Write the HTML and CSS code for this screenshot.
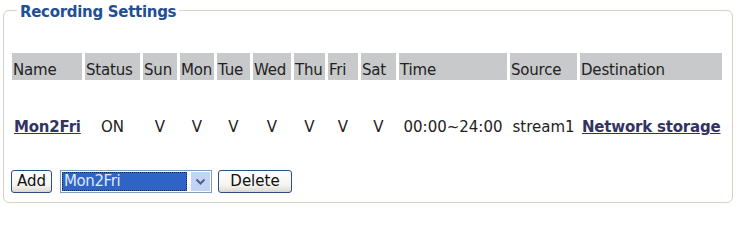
FILE: index.html
```html
<!DOCTYPE html>
<html>
<head>
<meta charset="utf-8">
<title>Recording Settings</title>
<link rel="stylesheet" href="styles.css">
</head>
<body>
<fieldset class="rec">
  <legend class="rec-title">Recording Settings</legend>
  <table class="rec-table">
    <colgroup>
      <col class="c-name"><col class="c-status"><col class="c-sun"><col class="c-mon"><col class="c-tue"><col class="c-wed"><col class="c-thu"><col class="c-fri"><col class="c-sat"><col class="c-time"><col class="c-source"><col class="c-dest">
    </colgroup>
    <thead>
      <tr>
        <th>Name</th><th>Status</th><th>Sun</th><th>Mon</th><th>Tue</th><th>Wed</th><th>Thu</th><th>Fri</th><th>Sat</th><th>Time</th><th>Source</th><th>Destination</th>
      </tr>
    </thead>
    <tbody>
      <tr>
        <td><a class="lnk" href="#">Mon2Fri</a></td><td>ON</td><td>V</td><td>V</td><td>V</td><td>V</td><td>V</td><td>V</td><td>V</td><td>00:00~24:00</td><td>stream1</td><td><a class="lnk" href="#">Network storage</a></td>
      </tr>
    </tbody>
  </table>
  <div class="actions">
    <button class="btn btn-add" type="button">Add</button>
    <div class="combo" role="combobox" aria-expanded="false">
      <span class="combo-val"><span class="combo-text">Mon2Fri</span></span>
      <span class="combo-arrow"><svg width="11" height="8" viewBox="0 0 11 8"><path d="M1.5 1.5 L5.5 5.5 L9.5 1.5" fill="none" stroke="#4d6185" stroke-width="2"/></svg></span>
    </div>
    <button class="btn btn-del" type="button">Delete</button>
  </div>
</fieldset>
</body>
</html>
```
FILE: styles.css
```css
html, body {
  margin: 0;
  padding: 0;
  background: #ffffff;
}
body {
  font-family: "DejaVu Sans", Verdana, sans-serif;
  font-size: 15px;
  color: #222222;
}
.rec {
  margin: 0 6px 0 3px;
  padding: 30px 5px 9px 5px;
  border: 1px solid #d3d3c6;
  border-radius: 6px;
  box-sizing: border-box;
  width: 730px;
}
.rec-title {
  margin-left: 8px;
  padding: 4px 3px 0 3px;
  line-height: 16px;
  font-weight: bold;
  font-size: 15px;
  color: #1f4f95;
  letter-spacing: -0.3px;
}
.rec-table {
  border-collapse: separate;
  border-spacing: 3px;
  table-layout: fixed;
  width: 716px;
  font-size: 15px;
}
.c-name { width: 70px; }
.c-status { width: 55px; }
.c-sun { width: 34px; }
.c-mon { width: 34px; }
.c-tue { width: 33px; }
.c-wed { width: 38px; }
.c-thu { width: 31px; }
.c-fri { width: 30px; }
.c-sat { width: 35px; }
.c-time { width: 108px; }
.c-source { width: 67px; }
.c-dest { width: 142px; }
.rec-table th {
  background: #c8c9cb;
  font-weight: normal;
  text-align: left;
  padding: 8px 0 1px 0;
  text-indent: 1px;
  line-height: 18px;
  white-space: nowrap;
  color: #222222;
  letter-spacing: -0.2px;
}
.rec-table td {
  text-align: center;
  padding: 35px 0 10px 0;
  line-height: 18px;
  white-space: nowrap;
  color: #222222;
}
.rec-table td:first-child {
  text-align: left;
  padding-left: 2px;
}
.rec-table td:last-child {
  text-align: left;
  padding-left: 2px;
}
.lnk {
  color: #33335f;
  font-weight: bold;
  text-decoration: underline;
  letter-spacing: -0.2px;
}
.actions {
  display: flex;
  align-items: center;
  margin-top: 21px;
  padding-left: 2px;
  height: 23px;
}
.btn {
  font-family: "DejaVu Sans", Verdana, sans-serif;
  font-size: 15px;
  height: 23px;
  line-height: 19px;
  padding: 0 5px;
  border: 1px solid #2b4f7e;
  border-radius: 3px;
  background: linear-gradient(#ffffff, #f3f3ef 70%, #d9d8cf);
  color: #111111;
  box-sizing: border-box;
}
.btn-add {
  width: 41px;
  padding: 0 4px;
}
.btn-del {
  width: 74px;
  margin-left: 6px;
}
.combo {
  display: flex;
  width: 152px;
  height: 23px;
  margin-left: 8px;
  border: 1px solid #7f9db9;
  box-sizing: border-box;
  background: #ffffff;
  padding: 1px;
}
.combo-val {
  flex: 1;
  background: #2f64c6;
  outline: 1px dotted #1a2a4a;
  outline-offset: -1px;
  display: flex;
  align-items: center;
}
.combo-text {
  color: #dfeaff;
  font-size: 15px;
  line-height: 17px;
  padding-left: 2px;
  letter-spacing: -0.4px;
}
.combo-arrow {
  width: 19px;
  margin-left: 4px;
  background: #c3d3f5;
  display: flex;
  align-items: center;
  justify-content: center;
}
```
